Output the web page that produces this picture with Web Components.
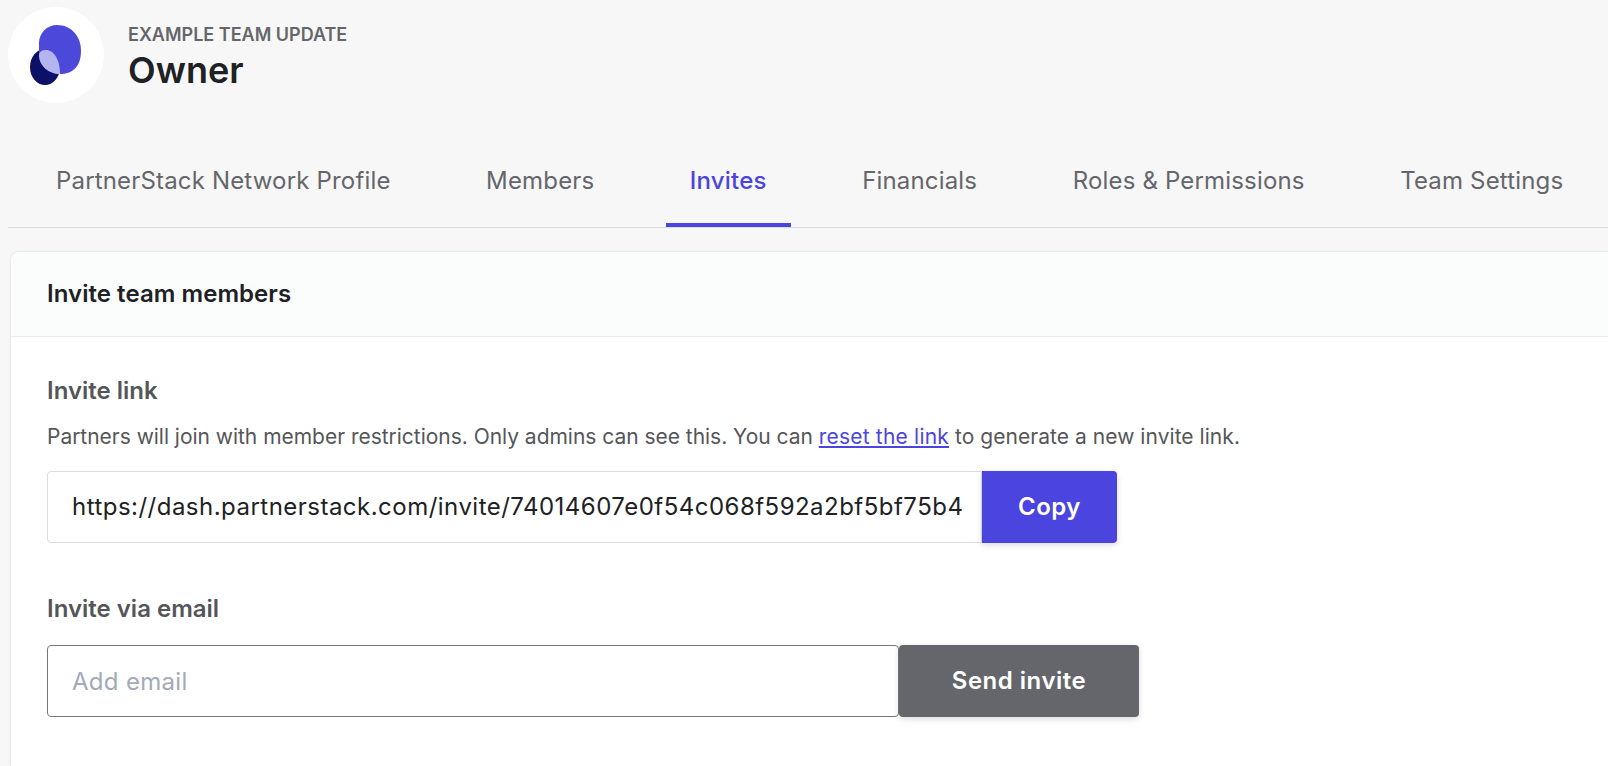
<!DOCTYPE html>
<html><head><meta charset="utf-8"><style>
html,body{margin:0;padding:0;height:766px;overflow:hidden;background:#f7f7f7;font-family:Inter,"Liberation Sans",sans-serif}
</style></head><body>
<team-page></team-page>
<script>
function def(name,html){customElements.define(name,class extends HTMLElement{constructor(){super();this.attachShadow({mode:'open'}).innerHTML=html;}});}
def('team-logo',`<style>:host{display:flex;flex:none;width:96px;height:96px;border-radius:50%;background:#fff;align-items:center;justify-content:center}svg{display:block}</style>
<svg width="96" height="96" viewBox="0 0 96 96"><ellipse cx="37" cy="60" rx="15" ry="18" fill="#0c1066"/><path d="M49 18C63 18 73 29 73 44C73 60 64 67 52 67C41 67 31 59 31 48V36C31 26 39 18 49 18Z" fill="#4c49da"/><path d="M31 48C31 45 34 43 38 43C46 43 52 53 52 67C41 67 31 59 31 48Z" fill="#b4b5ee"/></svg>`);
def('team-header',`<style>:host{display:flex;align-items:flex-start;gap:24px;padding:7px 0 0 8px;height:121px;box-sizing:content-box}
.eb{font-size:18px;line-height:22px;font-weight:600;color:#65666b;margin-top:17px}
.t{font-size:36px;line-height:44px;font-weight:600;color:#202124;margin-top:2px}</style>
<team-logo></team-logo><div><div class="eb">EXAMPLE TEAM UPDATE</div><div class="t">Owner</div></div>`);
def('tab-item',`<style>:host{display:flex;align-items:center;padding:10px 24px 0;height:100%;box-sizing:border-box;font-size:24px;letter-spacing:.17px;color:#65666b;white-space:nowrap;border-bottom:4px solid transparent}
:host([active]){color:#4c44de;font-weight:500;letter-spacing:.2px;border-bottom-color:#4c44de}</style><slot></slot>`);
def('tab-bar',`<style>:host{display:flex;gap:47.5px;margin-left:8px;padding-left:24px;height:100px;box-sizing:border-box;border-bottom:1px solid #dcdcdc;}</style><slot></slot>`);
def('field-group',`<style>:host{display:flex;height:72px}</style><slot></slot>`);
def('text-box',`<style>:host{display:flex;align-items:center;box-sizing:border-box;height:72px;padding:0 24px 1px;font-size:24px;color:#202124;background:#fff;border:1px solid #dcdcdc;border-radius:4px 0 0 4px;white-space:nowrap;letter-spacing:.48px}
:host([dark]){border-color:#76777b;border-radius:4px;color:#a2a9b8;width:852px;letter-spacing:.3px;padding-bottom:0}</style><slot></slot>`);
def('action-button',`<style>:host{display:flex;align-items:center;justify-content:center;box-sizing:border-box;height:72px;padding-bottom:2px;background:var(--bg,#4c44de);color:#fff;font-size:24px;font-weight:600;letter-spacing:.5px;border-radius:0 4px 4px 0;box-shadow:0 2px 6px rgba(0,0,0,.15);white-space:nowrap}
:host([grey]){border-radius:4px}</style><slot></slot>`);
def('invite-card',`<style>:host{display:block;margin:24px 0 0 11px;width:1597px;height:514px;overflow:hidden;background:#fff;border-radius:8px 0 0 0;box-shadow:0 0 3px rgba(0,0,0,.13)}
.h{height:85px;box-sizing:border-box;padding:0 36px 2px;background:#fbfdfc;border-bottom:1px solid #ececec;border-radius:8px 0 0 0;display:flex;align-items:center;font-size:24px;font-weight:600;letter-spacing:.05px;color:#202124}
.b{padding:39px 36px 0}
h3{margin:0;font-size:24px;line-height:30px;font-weight:600;color:#555659}
p{margin:17px 0 0;font-size:21px;line-height:28px;color:#555659;letter-spacing:-.025px}
a{color:#4c44de;text-decoration:underline;letter-spacing:.2px}
span{letter-spacing:.05px}
.f1{margin-top:20px}
h3.two{margin-top:51px}
.f2{margin-top:21px}</style>
<div class="h">Invite team members</div>
<div class="b"><h3>Invite link</h3>
<p>Partners will join with member restrictions. Only admins can see this. You can <a href="#">reset the link</a><span> to generate a new invite link.</span></p>
<field-group class="f1"><text-box style="width:935px">https://dash.partnerstack.com/invite/74014607e0f54c068f592a2bf5bf75b4</text-box><action-button style="width:135px">Copy</action-button></field-group>
<h3 class="two">Invite via email</h3>
<field-group class="f2"><text-box dark>Add email</text-box><action-button grey style="width:240px;--bg:#65666b">Send invite</action-button></field-group></div>`);
def('team-page',`<style>:host{display:block;width:1608px;height:766px;overflow:hidden}</style><team-header></team-header>
<tab-bar><tab-item>PartnerStack Network Profile</tab-item><tab-item>Members</tab-item><tab-item active>Invites</tab-item><tab-item>Financials</tab-item><tab-item>Roles &amp; Permissions</tab-item><tab-item>Team Settings</tab-item></tab-bar>
<invite-card></invite-card>`);
</script></body></html>
